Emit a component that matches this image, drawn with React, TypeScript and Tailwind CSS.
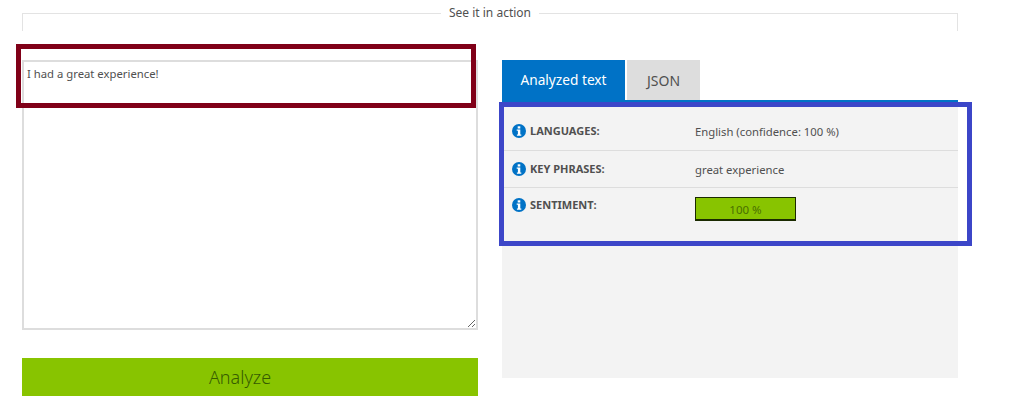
import React, { useState } from 'react';

const rows = [
  { label: 'LANGUAGES:', value: 'English (confidence: 100 %)' },
  { label: 'KEY PHRASES:', value: 'great experience' },
];

const InfoIcon = () => (
  <svg viewBox="0 0 14 14" className="w-[14px] h-[14px] shrink-0">
    <circle cx="7" cy="7" r="7" fill="#0072c6" />
    <rect x="5.7" y="2.3" width="2.6" height="2.2" fill="#fff" />
    <path d="M4.7 5.6h3.6v5h1v1.1H4.9v-1.1h1v-3.9h-1.2z" fill="#fff" />
  </svg>
);

const Label = ({ text }: { text: string }) => (
  <div className="w-[183px] flex items-center gap-[4px] text-[11px] font-bold text-[#505050] leading-[14px]">
    <InfoIcon />
    <span>{text}</span>
  </div>
);

export default function App() {
  const [text, setText] = useState('I had a great experience!');

  return (
    <div className="relative w-[1036px] h-[418px] overflow-hidden bg-white font-['Noto_Sans',sans-serif] text-[#505050]">
      <fieldset className="mx-[22px] mt-[3px] w-[936px] h-[28px] border border-b-0 border-[#e3e3e3]">
        <legend className="mx-auto px-2 text-[12px] leading-[20px] text-[#505050]">See it in action</legend>
      </fieldset>

      <div className="mx-[22px] mt-[29px] flex gap-[24px]">
        {/* Entrada */}
        <div className="w-[456px] flex flex-col">
          <textarea
            value={text}
            onChange={(e) => setText(e.target.value)}
            className="w-full h-[270px] block border-2 border-[#dddddd] px-[3px] py-[4px] text-[11.3px] leading-[16px] text-[#505050] outline-none"
          />
          <button className="mt-[28px] h-[38px] w-full pr-[20px] bg-[#88c400] text-[18px] font-light text-[#365c00]">
            Analyze
          </button>
        </div>

        {/* Resultado */}
        <div className="w-[456px] flex flex-col">
          <div className="flex gap-[2px] h-[40px]">
            <div className="w-[123px] bg-[#0072c6] text-white text-[13.7px] flex items-center justify-center">Analyzed text</div>
            <div className="w-[73px] bg-[#dddddd] text-[#505050] text-[14px] flex items-center justify-center">JSON</div>
          </div>
          <div className="h-[278px] bg-[#f3f3f3] border-t-[6px] border-[#0072c6]">
            {rows.map((row) => (
              <div key={row.label} className="h-[37px] first:h-[45px] first:pt-[6px] flex items-center px-[10px] border-b border-[#dddddd]">
                <Label text={row.label} />
                <span className="mt-[2px] text-[11.3px] leading-[16px] text-[#505050]">{row.value}</span>
              </div>
            ))}
            <div className="flex items-start px-[10px] pt-[9px]">
              <div className="mt-[1px]"><Label text="SENTIMENT:" /></div>
              <div className="w-[101px] h-[24px] pt-[2px] bg-[#88c400] border border-b-2 border-[#1a2a00] text-[11.5px] text-[#4a7000] flex items-center justify-center">
                100 %
              </div>
            </div>
          </div>
        </div>
      </div>

      {/* Marcações sobre o print */}
      <div className="absolute left-[16px] top-[44px] w-[460px] h-[64px] border-[5px] border-[#800018] pointer-events-none" />
      <div className="absolute left-[499px] top-[102px] w-[473px] h-[144px] border-[5px] border-[#3c46c8] pointer-events-none" />
    </div>
  );
}
